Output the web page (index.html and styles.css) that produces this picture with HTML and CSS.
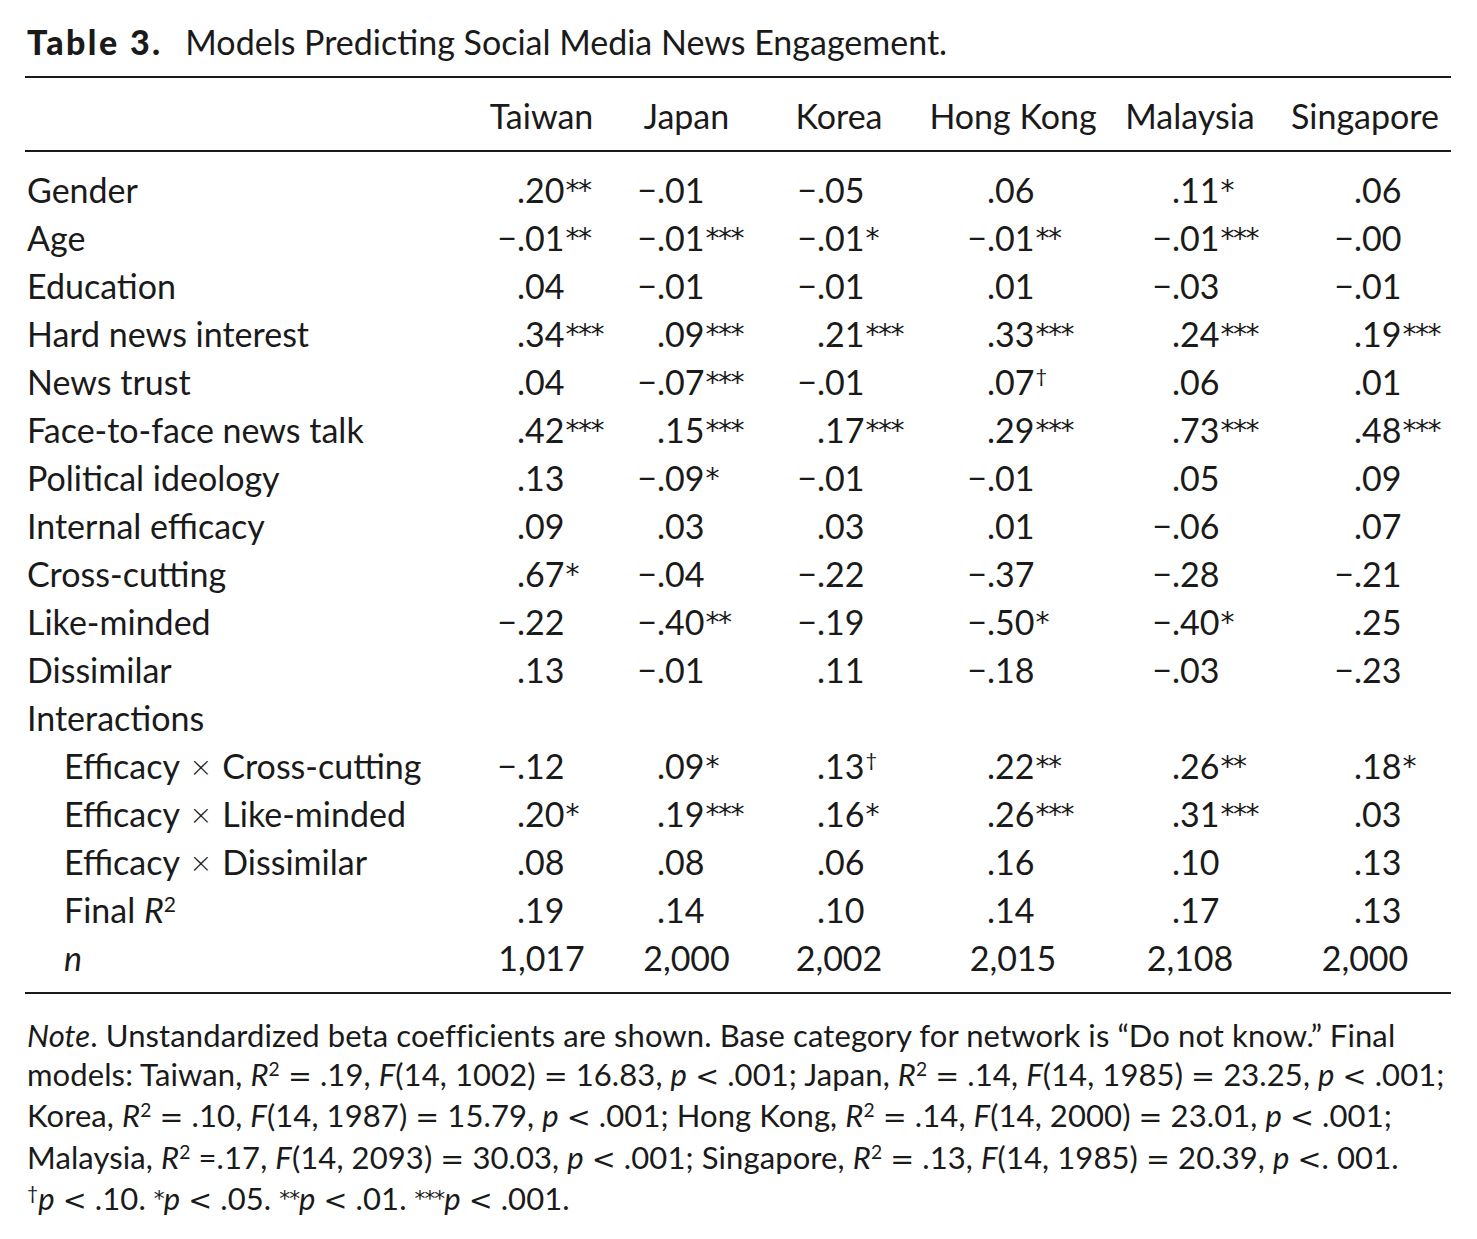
FILE: index.html
```html
<!DOCTYPE html>
<html lang="en">
<head>
<meta charset="utf-8">
<title>Table 3</title>
<link rel="stylesheet" href="styles.css">
</head>
<body>
<div class="page">
  <h1 class="title"><b>Table 3.</b> Models Predicting Social Media News Engagement.</h1>
  <div class="table">
    <div class="row head">
      <div class="label"></div>
      <div class="h">Taiwan</div>
      <div class="h">Japan</div>
      <div class="h">Korea</div>
      <div class="h">Hong Kong</div>
      <div class="h">Malaysia</div>
      <div class="h">Singapore</div>
    </div>
    <div class="tbody">
      <div class="row">
        <div class="label">Gender</div>
        <div class="v"><span class="i"></span><span class="f">.20<span class="s">**</span></span></div>
        <div class="v"><span class="i">−</span><span class="f">.01</span></div>
        <div class="v"><span class="i">−</span><span class="f">.05</span></div>
        <div class="v"><span class="i"></span><span class="f">.06</span></div>
        <div class="v"><span class="i"></span><span class="f">.11<span class="s">*</span></span></div>
        <div class="v"><span class="i"></span><span class="f">.06</span></div>
      </div>
      <div class="row">
        <div class="label">Age</div>
        <div class="v"><span class="i">−</span><span class="f">.01<span class="s">**</span></span></div>
        <div class="v"><span class="i">−</span><span class="f">.01<span class="s">***</span></span></div>
        <div class="v"><span class="i">−</span><span class="f">.01<span class="s">*</span></span></div>
        <div class="v"><span class="i">−</span><span class="f">.01<span class="s">**</span></span></div>
        <div class="v"><span class="i">−</span><span class="f">.01<span class="s">***</span></span></div>
        <div class="v"><span class="i">−</span><span class="f">.00</span></div>
      </div>
      <div class="row">
        <div class="label">Education</div>
        <div class="v"><span class="i"></span><span class="f">.04</span></div>
        <div class="v"><span class="i">−</span><span class="f">.01</span></div>
        <div class="v"><span class="i">−</span><span class="f">.01</span></div>
        <div class="v"><span class="i"></span><span class="f">.01</span></div>
        <div class="v"><span class="i">−</span><span class="f">.03</span></div>
        <div class="v"><span class="i">−</span><span class="f">.01</span></div>
      </div>
      <div class="row">
        <div class="label">Hard news interest</div>
        <div class="v"><span class="i"></span><span class="f">.34<span class="s">***</span></span></div>
        <div class="v"><span class="i"></span><span class="f">.09<span class="s">***</span></span></div>
        <div class="v"><span class="i"></span><span class="f">.21<span class="s">***</span></span></div>
        <div class="v"><span class="i"></span><span class="f">.33<span class="s">***</span></span></div>
        <div class="v"><span class="i"></span><span class="f">.24<span class="s">***</span></span></div>
        <div class="v"><span class="i"></span><span class="f">.19<span class="s">***</span></span></div>
      </div>
      <div class="row">
        <div class="label">News trust</div>
        <div class="v"><span class="i"></span><span class="f">.04</span></div>
        <div class="v"><span class="i">−</span><span class="f">.07<span class="s">***</span></span></div>
        <div class="v"><span class="i">−</span><span class="f">.01</span></div>
        <div class="v"><span class="i"></span><span class="f">.07<span class="dg">†</span></span></div>
        <div class="v"><span class="i"></span><span class="f">.06</span></div>
        <div class="v"><span class="i"></span><span class="f">.01</span></div>
      </div>
      <div class="row">
        <div class="label">Face-to-face news talk</div>
        <div class="v"><span class="i"></span><span class="f">.42<span class="s">***</span></span></div>
        <div class="v"><span class="i"></span><span class="f">.15<span class="s">***</span></span></div>
        <div class="v"><span class="i"></span><span class="f">.17<span class="s">***</span></span></div>
        <div class="v"><span class="i"></span><span class="f">.29<span class="s">***</span></span></div>
        <div class="v"><span class="i"></span><span class="f">.73<span class="s">***</span></span></div>
        <div class="v"><span class="i"></span><span class="f">.48<span class="s">***</span></span></div>
      </div>
      <div class="row">
        <div class="label">Political ideology</div>
        <div class="v"><span class="i"></span><span class="f">.13</span></div>
        <div class="v"><span class="i">−</span><span class="f">.09<span class="s">*</span></span></div>
        <div class="v"><span class="i">−</span><span class="f">.01</span></div>
        <div class="v"><span class="i">−</span><span class="f">.01</span></div>
        <div class="v"><span class="i"></span><span class="f">.05</span></div>
        <div class="v"><span class="i"></span><span class="f">.09</span></div>
      </div>
      <div class="row">
        <div class="label">Internal efficacy</div>
        <div class="v"><span class="i"></span><span class="f">.09</span></div>
        <div class="v"><span class="i"></span><span class="f">.03</span></div>
        <div class="v"><span class="i"></span><span class="f">.03</span></div>
        <div class="v"><span class="i"></span><span class="f">.01</span></div>
        <div class="v"><span class="i">−</span><span class="f">.06</span></div>
        <div class="v"><span class="i"></span><span class="f">.07</span></div>
      </div>
      <div class="row">
        <div class="label">Cross-cutting</div>
        <div class="v"><span class="i"></span><span class="f">.67<span class="s">*</span></span></div>
        <div class="v"><span class="i">−</span><span class="f">.04</span></div>
        <div class="v"><span class="i">−</span><span class="f">.22</span></div>
        <div class="v"><span class="i">−</span><span class="f">.37</span></div>
        <div class="v"><span class="i">−</span><span class="f">.28</span></div>
        <div class="v"><span class="i">−</span><span class="f">.21</span></div>
      </div>
      <div class="row">
        <div class="label">Like-minded</div>
        <div class="v"><span class="i">−</span><span class="f">.22</span></div>
        <div class="v"><span class="i">−</span><span class="f">.40<span class="s">**</span></span></div>
        <div class="v"><span class="i">−</span><span class="f">.19</span></div>
        <div class="v"><span class="i">−</span><span class="f">.50<span class="s">*</span></span></div>
        <div class="v"><span class="i">−</span><span class="f">.40<span class="s">*</span></span></div>
        <div class="v"><span class="i"></span><span class="f">.25</span></div>
      </div>
      <div class="row">
        <div class="label">Dissimilar</div>
        <div class="v"><span class="i"></span><span class="f">.13</span></div>
        <div class="v"><span class="i">−</span><span class="f">.01</span></div>
        <div class="v"><span class="i"></span><span class="f">.11</span></div>
        <div class="v"><span class="i">−</span><span class="f">.18</span></div>
        <div class="v"><span class="i">−</span><span class="f">.03</span></div>
        <div class="v"><span class="i">−</span><span class="f">.23</span></div>
      </div>
      <div class="row">
        <div class="label">Interactions</div>
      </div>
      <div class="row">
        <div class="label sub">Efficacy <span class="x">×</span> Cross-cutting</div>
        <div class="v"><span class="i">−</span><span class="f">.12</span></div>
        <div class="v"><span class="i"></span><span class="f">.09<span class="s">*</span></span></div>
        <div class="v"><span class="i"></span><span class="f">.13<span class="dg">†</span></span></div>
        <div class="v"><span class="i"></span><span class="f">.22<span class="s">**</span></span></div>
        <div class="v"><span class="i"></span><span class="f">.26<span class="s">**</span></span></div>
        <div class="v"><span class="i"></span><span class="f">.18<span class="s">*</span></span></div>
      </div>
      <div class="row">
        <div class="label sub">Efficacy <span class="x">×</span> Like-minded</div>
        <div class="v"><span class="i"></span><span class="f">.20<span class="s">*</span></span></div>
        <div class="v"><span class="i"></span><span class="f">.19<span class="s">***</span></span></div>
        <div class="v"><span class="i"></span><span class="f">.16<span class="s">*</span></span></div>
        <div class="v"><span class="i"></span><span class="f">.26<span class="s">***</span></span></div>
        <div class="v"><span class="i"></span><span class="f">.31<span class="s">***</span></span></div>
        <div class="v"><span class="i"></span><span class="f">.03</span></div>
      </div>
      <div class="row">
        <div class="label sub">Efficacy <span class="x">×</span> Dissimilar</div>
        <div class="v"><span class="i"></span><span class="f">.08</span></div>
        <div class="v"><span class="i"></span><span class="f">.08</span></div>
        <div class="v"><span class="i"></span><span class="f">.06</span></div>
        <div class="v"><span class="i"></span><span class="f">.16</span></div>
        <div class="v"><span class="i"></span><span class="f">.10</span></div>
        <div class="v"><span class="i"></span><span class="f">.13</span></div>
      </div>
      <div class="row">
        <div class="label sub">Final <i>R</i><span class="sq">2</span></div>
        <div class="v"><span class="i"></span><span class="f">.19</span></div>
        <div class="v"><span class="i"></span><span class="f">.14</span></div>
        <div class="v"><span class="i"></span><span class="f">.10</span></div>
        <div class="v"><span class="i"></span><span class="f">.14</span></div>
        <div class="v"><span class="i"></span><span class="f">.17</span></div>
        <div class="v"><span class="i"></span><span class="f">.13</span></div>
      </div>
      <div class="row">
        <div class="label sub"><i>n</i></div>
        <div class="v ctr">1,017</div>
        <div class="v ctr">2,000</div>
        <div class="v ctr">2,002</div>
        <div class="v ctr">2,015</div>
        <div class="v ctr">2,108</div>
        <div class="v ctr">2,000</div>
      </div>
    </div>
  </div>
  <p class="note">
    <span class="line"><i>Note</i>. Unstandardized beta coefficients are shown. Base category for network is “Do not know.” Final</span>
    <span class="line">models: Taiwan, <i>R</i><span class="sq">2</span> <span class="op">=</span> .19, <i>F</i>(14, 1002) <span class="op">=</span> 16.83, <i>p</i> <span class="op">&lt;</span> .001; Japan, <i>R</i><span class="sq">2</span> <span class="op">=</span> .14, <i>F</i>(14, 1985) <span class="op">=</span> 23.25, <i>p</i> <span class="op">&lt;</span> .001;</span>
    <span class="line">Korea, <i>R</i><span class="sq">2</span> <span class="op">=</span> .10, <i>F</i>(14, 1987) <span class="op">=</span> 15.79, <i>p</i> <span class="op">&lt;</span> .001; Hong Kong, <i>R</i><span class="sq">2</span> <span class="op">=</span> .14, <i>F</i>(14, 2000) <span class="op">=</span> 23.01, <i>p</i> <span class="op">&lt;</span> .001;</span>
    <span class="line">Malaysia, <i>R</i><span class="sq">2</span> =.17, <i>F</i>(14, 2093) <span class="op">=</span> 30.03, <i>p</i> <span class="op">&lt;</span> .001; Singapore, <i>R</i><span class="sq">2</span> <span class="op">=</span> .13, <i>F</i>(14, 1985) <span class="op">=</span> 20.39, <i>p</i> <span class="op">&lt;</span>. 001.</span>
    <span class="line"><span class="sq">†</span><i>p</i> <span class="op">&lt;</span> .10. <span class="sn">*</span><i>p</i> <span class="op">&lt;</span> .05. <span class="sn">**</span><i>p</i> <span class="op">&lt;</span> .01. <span class="sn">***</span><i>p</i> <span class="op">&lt;</span> .001.</span>
  </p>
</div>
</body>
</html>
```

FILE: styles.css
```css
* { box-sizing: border-box; }

html, body {
  margin: 0;
  padding: 0;
  background: #ffffff;
}

body {
  font-family: Lato, "Noto Sans", "DejaVu Sans", sans-serif;
  color: #1a1a1a;
}

.page {
  padding: 20px 26px 0 25px;
  width: 1477px;
}

.title {
  margin: 0 0 0 2px;
  font-size: 34px;
  font-weight: 400;
  line-height: 44px;
  white-space: nowrap;
}

.title b {
  font-weight: 900;
  letter-spacing: 2.4px;
  margin-right: 14px;
}

.table {
  margin-top: 12px;
  width: 1426px;
  border-top: 2px solid #1a1a1a;
  border-bottom: 2px solid #1a1a1a;
  font-size: 34px;
}

.row {
  display: grid;
  grid-template-columns: 444px 145px 145px 160px 188px 166px 178px;
  height: 48px;
  align-items: center;
}

.head {
  height: 74px;
  border-bottom: 2px solid #1a1a1a;
}

.h {
  text-align: center;
  white-space: nowrap;
  padding-top: 2px;
}

.row > .h:last-child {
  padding-left: 6px;
}

.tbody {
  padding: 13px 0 11px;
}

.label {
  padding-left: 2px;
  white-space: nowrap;
}

.label.sub {
  padding-left: 39px;
}

.x {
  font-weight: 300;
  padding: 0 3px;
}

.v {
  display: flex;
  white-space: nowrap;
}

.v .i {
  flex: none;
  width: var(--d);
  text-align: right;
}

.row > :nth-child(2) { --d: 48px; }
.row > :nth-child(3) { --d: 43px; }
.row > :nth-child(4) { --d: 58px; }
.row > :nth-child(5) { --d: 68px; }
.row > :nth-child(6) { --d: 65px; }
.row > :nth-child(7) { --d: 81px; }

.v.ctr {
  justify-content: center;
}

.row > .v.ctr:last-child {
  padding-left: 6px;
}

.s {
  font-family: "DejaVu Sans", sans-serif;
  font-weight: 400;
  font-size: 28px;
  letter-spacing: -1.5px;
  vertical-align: 3px;
  line-height: 0;
  margin-left: 1px;
}

.dg {
  font-size: 20px;
  vertical-align: 12px;
  line-height: 0;
  margin-left: 1px;
}

.sq {
  font-size: 0.62em;
  vertical-align: 0.5em;
  line-height: 0;
}

.sn {
  font-family: "DejaVu Sans", sans-serif;
  font-size: 0.7em;
  letter-spacing: -1px;
  vertical-align: 0.2em;
  line-height: 0;
}

.op {
  font-family: "DejaVu Sans", sans-serif;
  font-weight: 400;
  font-size: 0.92em;
}

.note {
  margin: 22px 0 0 2px;
  font-size: 31px;
  line-height: 38.5px;
  letter-spacing: 0.1px;
}

.note .line {
  display: block;
  white-space: nowrap;
}
```
